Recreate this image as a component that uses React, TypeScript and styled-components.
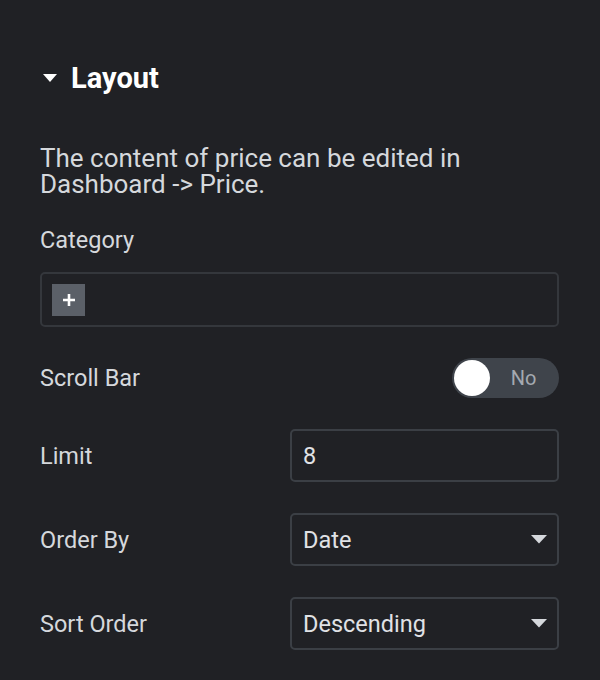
import styled, { createGlobalStyle } from "styled-components";

const GlobalStyle = createGlobalStyle`
    html, body {
        margin: 0;
        padding: 0;
        background: #202125;
    }
    body {
        font-family: Roboto, "Liberation Sans", sans-serif;
        -webkit-font-smoothing: antialiased;
    }
`;

interface SelectProps {
    value: string;
}

function Select({ value }: SelectProps) {
    return (
        <Field>
            <FieldText>{value}</FieldText>
            <Caret viewBox="0 0 16 9" aria-hidden>
                <path d="M0 0 L16 0 L8 8.5 Z" fill="#d5d8dc" />
            </Caret>
        </Field>
    );
}

export default function App() {
    return (
        <>
            <GlobalStyle />
            <Panel>
                <SectionHeader>
                    <HeaderCaret viewBox="0 0 14 8" aria-hidden>
                        <path d="M0 0 L14 0 L7 8 Z" fill="#ffffff" />
                    </HeaderCaret>
                    <Title>Layout</Title>
                </SectionHeader>

                <Description>
                    The content of price can be edited in Dashboard -&gt; Price.
                </Description>

                <Stack>
                    <Label>Category</Label>
                    <TagBox>
                        <AddButton aria-label="Add">
                            <svg width="14" height="14" viewBox="0 0 14 14" aria-hidden>
                                <path d="M7 1 V13 M1 7 H13" stroke="#fff" strokeWidth="2.6" />
                            </svg>
                        </AddButton>
                    </TagBox>
                </Stack>

                <Controls>
                    <Row>
                        <Label>Scroll Bar</Label>
                        <Switch>
                            <Knob />
                            <SwitchText>No</SwitchText>
                        </Switch>
                    </Row>
                    <Row>
                        <Label>Limit</Label>
                        <Field>
                            <FieldText>8</FieldText>
                        </Field>
                    </Row>
                    <Row>
                        <Label>Order By</Label>
                        <Select value="Date" />
                    </Row>
                    <Row>
                        <Label>Sort Order</Label>
                        <Select value="Descending" />
                    </Row>
                </Controls>
            </Panel>
        </>
    );
}

const Panel = styled.div`
    width: 600px;
    height: 680px;
    box-sizing: border-box;
    padding: 60px 41px 0 40px;
    background: #202125;
    display: flex;
    flex-direction: column;
    overflow: hidden;
`;

const SectionHeader = styled.div`
    display: flex;
    align-items: center;
    gap: 14px;
    height: 36px;
    padding-left: 3px;
`;

const HeaderCaret = styled.svg`
    width: 14px;
    height: 8px;
`;

const Title = styled.h2`
    margin: 0;
    font-size: 29px;
    font-weight: 700;
    color: #ffffff;
    line-height: 36px;
`;

const Description = styled.p`
    margin: 49px 0 0;
    font-size: 26px;
    line-height: 26px;
    color: #d5d8dc;
    max-width: 480px;
`;

const Stack = styled.div`
    display: flex;
    flex-direction: column;
    gap: 18px;
    margin-top: 29px;
`;

const Label = styled.span`
    font-size: 23.5px;
    line-height: 28px;
    color: #d5d8dc;
`;

const TagBox = styled.div`
    height: 55px;
    box-sizing: border-box;
    border: 2px solid #34373c;
    border-radius: 5px;
    display: flex;
    align-items: center;
    padding-left: 10px;
`;

const AddButton = styled.button`
    all: unset;
    width: 33px;
    height: 32px;
    background: #5b6068;
    display: flex;
    align-items: center;
    justify-content: center;
`;

const Controls = styled.div`
    display: flex;
    flex-direction: column;
    gap: 31px;
    margin-top: 31px;
`;

const Row = styled.div`
    display: grid;
    grid-template-columns: 250px 1fr;
    align-items: center;
    & > :last-child {
        justify-self: end;
    }
`;

const Switch = styled.div`
    width: 107px;
    height: 40px;
    border-radius: 20px;
    background: #3f444b;
    display: flex;
    align-items: center;
    padding: 0 2px;
    box-sizing: border-box;
`;

const Knob = styled.span`
    width: 36px;
    height: 36px;
    border-radius: 50%;
    background: #ffffff;
`;

const SwitchText = styled.span`
    flex: 1;
    text-align: center;
    font-size: 20px;
    color: #a4a9b0;
`;

const Field = styled.div`
    width: 269px;
    height: 53px;
    box-sizing: border-box;
    border: 2px solid #3b3f45;
    border-radius: 5px;
    display: flex;
    align-items: center;
    justify-content: space-between;
    padding: 0 10px 0 11px;
`;

const FieldText = styled.span`
    font-size: 23.5px;
    color: #e0e2e5;
`;

const Caret = styled.svg`
    width: 16px;
    height: 9px;
`;
